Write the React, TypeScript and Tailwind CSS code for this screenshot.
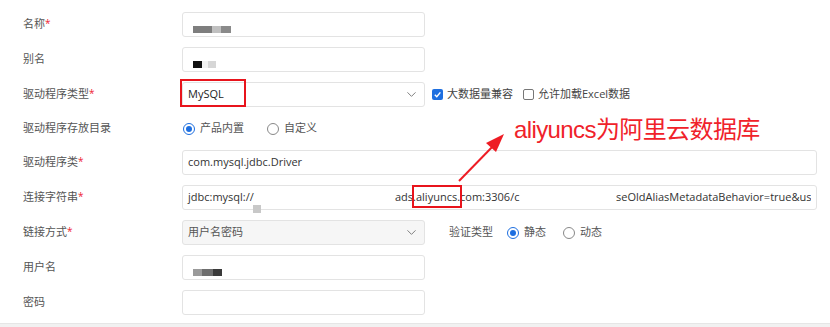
import { ChevronDown } from "lucide-react";

const font = "font-['Open_Sans','Noto_Sans_CJK_SC',sans-serif]";

function Label({ text, required }: { text: string; required?: boolean }) {
  return (
    <div className="w-[159px] shrink-0 text-[11px] text-[#555]">
      {text}
      {required && <span className="text-[#e23] text-[10px] align-top">*</span>}
    </div>
  );
}

function Input({ wide, children, disabled }: { wide?: boolean; children?: React.ReactNode; disabled?: boolean }) {
  return (
    <div
      className={`relative h-[25px] shrink-0 rounded-[3px] border border-[#e3e3e3] flex items-center px-[5px] text-[11px] text-[#333] ${
        wide ? "w-[635px]" : "w-[243px]"
      } ${disabled ? "bg-[#f6f6f6]" : "bg-white"}`}
    >
      {children}
    </div>
  );
}

function Select({ value, disabled }: { value: string; disabled?: boolean }) {
  return (
    <Input disabled={disabled}>
      <span className={disabled ? "text-[#555]" : "text-[#222]"}>{value}</span>
      <ChevronDown size={15} strokeWidth={1.5} className="absolute right-[5px] text-[#777]" />
    </Input>
  );
}

function Radio({ checked, label }: { checked?: boolean; label: string }) {
  return (
    <div className="flex items-center gap-[5px] text-[11px] text-[#555]">
      <span
        className={`w-[12px] h-[12px] rounded-full border flex items-center justify-center ${
          checked ? "border-[#1e6fe0]" : "border-[#888]"
        }`}
      >
        {checked && <span className="w-[6px] h-[6px] rounded-full bg-[#1e6fe0]" />}
      </span>
      {label}
    </div>
  );
}

function Checkbox({ checked, label }: { checked?: boolean; label: string }) {
  return (
    <div className="flex items-center gap-[4px] text-[11px] text-[#444]">
      <span
        className={`w-[11px] h-[11px] rounded-[2px] flex items-center justify-center ${
          checked ? "bg-[#1e6fe0]" : "border border-[#777] bg-white"
        }`}
      >
        {checked && (
          <svg width="9" height="9" viewBox="0 0 10 10">
            <path d="M2 5.2 L4.2 7.4 L8.2 2.6" stroke="white" strokeWidth="1.6" fill="none" />
          </svg>
        )}
      </span>
      {label}
    </div>
  );
}

function Blocks({ items }: { items: { w: number; c: string }[] }) {
  return (
    <div className="flex mt-[9px] pl-[5px]">
      {items.map((b, i) => (
        <span key={i} className="h-[7px] inline-block" style={{ width: b.w, background: b.c }} />
      ))}
    </div>
  );
}

export default function App() {
  return (
    <div className={`relative w-[830px] h-[327px] bg-white overflow-hidden ${font}`}>
      <div className="flex flex-col gap-[10px] pt-[12px] pl-[23px]">
        {/* 名称 */}
        <div className="flex items-center h-[25px]">
          <Label text="名称" required />
          <Input>
            <Blocks items={[{ w: 19, c: "#7e7e7e" }, { w: 9, c: "#c0c0c0" }, { w: 10, c: "#8a8a8a" }]} />
          </Input>
        </div>

        {/* 别名 */}
        <div className="flex items-center h-[25px]">
          <Label text="别名" />
          <Input>
            <Blocks items={[{ w: 9, c: "#111" }, { w: 6, c: "#f2f2f2" }, { w: 8, c: "#d6d6d6" }]} />
          </Input>
        </div>

        {/* 驱动程序类型 */}
        <div className="flex items-center h-[25px]">
          <Label text="驱动程序类型" required />
          <Select value="MySQL" />
          <div className="flex items-center gap-[10px] ml-[7px]">
            <Checkbox checked label="大数据量兼容" />
            <Checkbox label="允许加载Excel数据" />
          </div>
        </div>

        {/* 驱动程序存放目录 */}
        <div className="flex items-center h-[23px]">
          <Label text="驱动程序存放目录" />
          <div className="flex items-center gap-[23px] pl-[1px]">
            <Radio checked label="产品内置" />
            <Radio label="自定义" />
          </div>
        </div>

        {/* 驱动程序类 */}
        <div className="flex items-center h-[25px]">
          <Label text="驱动程序类" required />
          <Input wide>com.mysql.jdbc.Driver</Input>
        </div>

        {/* 连接字符串 */}
        <div className="flex items-center h-[25px]">
          <Label text="连接字符串" required />
          <Input wide>
            <span className="w-[207px] shrink-0">jdbc:mysql://</span>
            <span className="w-[221px] shrink-0 whitespace-nowrap">ads.aliyuncs.com:3306/c</span>
            <span className="whitespace-nowrap overflow-hidden">seOldAliasMetadataBehavior=true&amp;us</span>
            <span className="absolute left-[70px] top-[19px] w-[8px] h-[8px] bg-[#c8c8c8]" />
          </Input>
        </div>

        {/* 链接方式 */}
        <div className="flex items-center h-[25px]">
          <Label text="链接方式" required />
          <Select value="用户名密码" disabled />
          <div className="flex items-center ml-[24px] text-[11px] text-[#555]">
            <span className="w-[58px]">验证类型</span>
            <div className="flex items-center gap-[17px]">
              <Radio checked label="静态" />
              <Radio label="动态" />
            </div>
          </div>
        </div>

        {/* 用户名 */}
        <div className="flex items-center h-[25px]">
          <Label text="用户名" />
          <Input>
            <Blocks items={[{ w: 9, c: "#9a9a9a" }, { w: 11, c: "#6e6e6e" }, { w: 9, c: "#3a3a3a" }]} />
          </Input>
        </div>

        {/* 密码 */}
        <div className="flex items-center h-[25px]">
          <Label text="密码" />
          <Input />
        </div>
      </div>

      {/* bottom edge */}
      <div className="absolute left-0 right-0 bottom-0 h-[4px] bg-[#f1f1f1] border-t border-[#e6e6e6]" />

      {/* annotations */}
      <div className="absolute left-[180px] top-[79px] w-[66px] h-[28px] border-2 border-[#e8141c]" />
      <div className="absolute left-[412px] top-[185px] w-[50px] h-[23px] border-2 border-[#e8141c]" />
      <div className="absolute left-[514px] top-[114px] text-[24px] leading-[32px] tracking-[-0.6px] text-[#f0222a] font-['Liberation_Sans','Noto_Sans_CJK_SC',sans-serif] whitespace-nowrap">
        aliyuncs为阿里云数据库
      </div>
      <svg className="absolute left-0 top-0" width="830" height="327">
        <line x1="459" y1="181" x2="497" y2="142" stroke="#ee1c24" strokeWidth="2" />
        <polygon points="504,134 486,143 496,152" fill="#ee1c24" />
      </svg>
    </div>
  );
}
